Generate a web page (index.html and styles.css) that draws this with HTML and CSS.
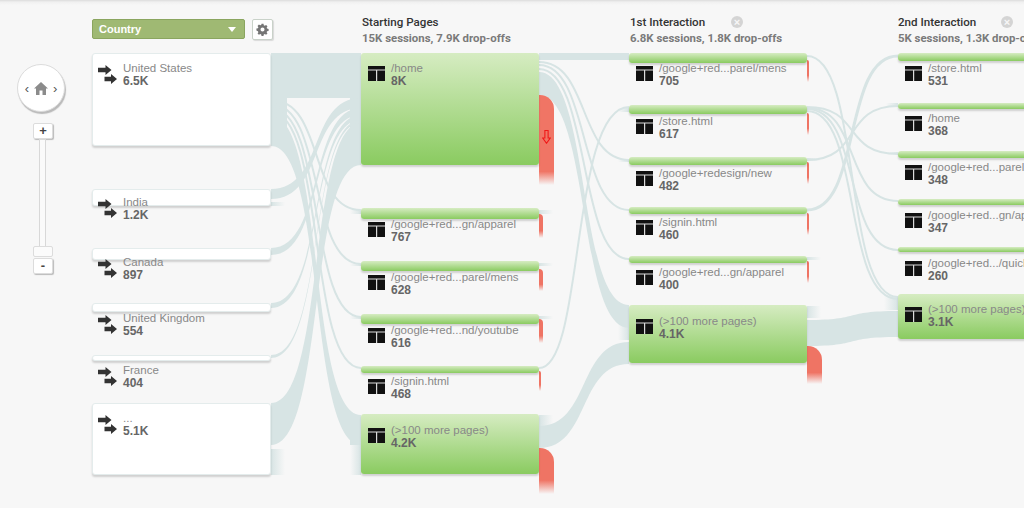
FILE: index.html
```html
<!DOCTYPE html>
<html lang="en">
<head>
<meta charset="utf-8">
<title>Users Flow</title>
<link rel="stylesheet" href="styles.css">
</head>
<body>
<main class="stage">
  <svg class="icon-defs" width="0" height="0" aria-hidden="true">
    <defs>
      <symbol id="arrows" viewBox="0 0 20 20">
        <path d="M0 2.800h7.500V0L13.500 5 7.500 10V7.200H0z"/>
        <path d="M6.500 11.800h6.500V9L19 14 13 19v-2.800H6.500z"/>
      </symbol>
      <symbol id="page" viewBox="0 0 17 15">
        <path d="M0 0h17v15H0z"/>
        <path d="M0 3.400h17v1.200H0zM8 4h1.200v11H8z" fill="#fff" opacity=".85"/>
      </symbol>
      <linearGradient id="fade-r"><stop offset="0" stop-color="#d7e4e4"/><stop offset="1" stop-color="#d7e4e4" stop-opacity="0"/></linearGradient>
      <linearGradient id="fade-l"><stop offset="0" stop-color="#d7e4e4" stop-opacity="0"/><stop offset="1" stop-color="#d7e4e4"/></linearGradient>
    </defs>
  </svg>

  <svg class="links" width="1024" height="508" viewBox="0 0 1024 508" aria-hidden="true">
    <g class="solid">
      <path d="M271 53h90v45h-90z"/>
      <path d="M271 98h16v48h-16z"/>
      <path d="M350 98h11v67h-11z"/>
      <path d="M350 415h11v30h-11z"/>
      <path d="M539 53h90v7h-90z"/>
      <!-- country to starting pages -->
      <path d="M271 116C325 116 308 415 361 415V445C308 445 325 146 271 146z"/>
      <path d="M271 189C325 189 308 98 361 98V108C308 108 325 199 271 199z"/>
      <path d="M271 248C325 248 308 108 361 108V115C308 115 325 255 271 255z"/>
      <path d="M271 303C325 303 308 115 361 115V120C308 120 325 308 271 308z"/>
      <path d="M271 355C325 355 308 120 361 120V123C308 123 325 358 271 358z"/>
      <path d="M271 403C325 403 308 123 361 123V165C308 165 325 445 271 445z"/>
      <!-- starting pages to first interaction -->
      <path d="M539 72C590 72 578 305 629 305V328C578 328 590 95 539 95z"/>
      <path d="M539 426C590 426 578 342 629 342V364C578 364 590 448 539 448z"/>
      <!-- first to second interaction -->
      <path d="M807 320C862 320 842 311 898 311V337C842 337 862 346 807 346z"/>
    </g>
    <g class="ribbons">
      <path class="w2" d="M271 100C325 100 308 210 361 210"/>
      <path class="w2" d="M271 104C325 104 308 264 361 264"/>
      <path class="w2" d="M271 108C325 108 308 317 361 317"/>
      <path class="w2" d="M271 112C325 112 308 368 361 368"/>

      <path class="w2" d="M539 62C590 62 578 160 629 160"/>
      <path class="w2" d="M539 65C590 65 578 210 629 210"/>
      <path class="w2" d="M539 69C590 69 578 259 629 259"/>
      <path class="w2" d="M539 368C585 368 570 107 629 107"/>

      <path class="w2" d="M807 56C862 56 842 297 898 297"/>
      <path class="w2" d="M807 107C862 107 842 154 898 154"/>
      <path class="w2" d="M807 108C862 108 842 201 898 201"/>
      <path class="w2" d="M807 109C862 109 842 250 898 250"/>
      <path class="w2" d="M807 111C862 111 842 299 898 299"/>
      <path class="w2" d="M807 160C862 160 842 106 898 106"/>
      <path class="w3" d="M807 210C862 210 842 56 898 56"/>
    </g>
    <g class="stubs-r">
      <path d="M271 202h14v4h-14z"/>
      <path d="M271 449h14v26h-14z"/>
      <path d="M539 415h14v11h-14z"/>
      <path d="M539 210h14v4h-14z"/>
      <path d="M539 263h14v3h-14z"/>
      <path d="M539 316h14v3h-14z"/>
      <path d="M807 306h14v12h-14z"/>
      <path d="M807 257h14v3h-14z"/>
      <path d="M807 158h14v3h-14z"/>
    </g>
    <g class="stubs-l">
      <path d="M350 445h11v30h-11z"/>
      <path d="M350 210h11v4h-11z"/>
      <path d="M350 263h11v3h-11z"/>
      <path d="M350 316h11v3h-11z"/>
      <path d="M618 108h11v4h-11z"/>
      <path d="M618 160h11v2h-11z"/>
      <path d="M618 322h11v18h-11z"/>
      <path d="M886 103h12v3h-12z"/>
      <path d="M886 152h12v2h-12z"/>
      <path d="M884 296h14v14h-14z"/>
    </g>
  </svg>

  <div class="drop d1"></div><div class="drop d2"></div><div class="drop d3"></div><div class="drop d4"></div><div class="drop d5"></div><div class="drop d6"></div>
  <div class="drop d7"></div><div class="drop d8"></div><div class="drop d9"></div><div class="drop d10"></div><div class="drop d11"></div><div class="drop d12"></div>
  <svg class="down" viewBox="0 0 8 13" aria-hidden="true"><path d="M2.500 .5h3v7H7.500L4 12.300 .5 7.500h2z"/></svg>

  <header class="controls">
    <button class="select" type="button">Country<span class="caret"></span></button>
    <button class="gear" type="button" aria-label="Settings">
      <svg viewBox="0 0 16 16"><path d="M6.800 1h2.400l.4 1.900 1.200.5 1.600-1 1.700 1.700-1 1.600.5 1.200 1.900.4v2.400l-1.900.4-.5 1.200 1 1.600-1.700 1.700-1.600-1-1.200.5-.4 1.900H6.800l-.4-1.900-1.200-.5-1.600 1-1.700-1.700 1-1.600-.5-1.200L.5 9.200V6.800l1.900-.4.500-1.200-1-1.600 1.700-1.700 1.600 1 1.200-.5zM8 5.500a2.500 2.500 0 1 0 0 5 2.500 2.500 0 0 0 0-5z" fill-rule="evenodd"/></svg>
    </button>
  </header>

  <div class="head h1"><h2>Starting Pages</h2><p>15K sessions, 7.9K drop-offs</p></div>
  <div class="head h2"><h2>1st Interaction</h2><p>6.8K sessions, 1.8K drop-offs</p><span class="close">×</span></div>
  <div class="head h3"><h2>2nd Interaction</h2><p>5K sessions, 1.3K drop-offs</p><span class="close">×</span></div>

  <nav class="zoomer" aria-label="Zoom">
    <div class="pan"><span class="chev">‹</span>
      <svg class="home" viewBox="0 0 14 13"><path d="M7 0 0 6.500h2V13h3.500V8.500h3V13H12V6.500h2z"/></svg>
      <span class="chev">›</span></div>
    <button class="zbtn plus" type="button">+</button>
    <div class="track"></div>
    <div class="handle"></div>
    <button class="zbtn minus" type="button">-</button>
  </nav>

  <section class="node white c0 a1"><div class="info"><svg class="ico"><use href="#arrows"/></svg><div><span>United States</span><b>6.5K</b></div></div></section>
  <section class="node white c0 a2"><div class="info up2"><svg class="ico"><use href="#arrows"/></svg><div><span>India</span><b>1.2K</b></div></div></section>
  <section class="node white c0 a3"><div class="info up1"><svg class="ico"><use href="#arrows"/></svg><div><span>Canada</span><b>897</b></div></div></section>
  <section class="node white c0 a4"><div class="info"><svg class="ico"><use href="#arrows"/></svg><div><span>United Kingdom</span><b>554</b></div></div></section>
  <section class="node white c0 a5"><div class="info"><svg class="ico"><use href="#arrows"/></svg><div><span>France</span><b>404</b></div></div></section>
  <section class="node white c0 a6"><div class="info"><svg class="ico"><use href="#arrows"/></svg><div><span>...</span><b>5.1K</b></div></div></section>

  <section class="node green c1 b1"><div class="info up1"><svg class="page"><use href="#page"/></svg><div><span>/home</span><b>8K</b></div></div></section>
  <section class="node green c1 b2"><div class="info"><svg class="page"><use href="#page"/></svg><div><span>/google+red...gn/apparel</span><b>767</b></div></div></section>
  <section class="node green c1 b3"><div class="info"><svg class="page"><use href="#page"/></svg><div><span>/google+red...parel/mens</span><b>628</b></div></div></section>
  <section class="node green c1 b4"><div class="info"><svg class="page"><use href="#page"/></svg><div><span>/google+red...nd/youtube</span><b>616</b></div></div></section>
  <section class="node green c1 b5"><div class="info up1"><svg class="page"><use href="#page"/></svg><div><span>/signin.html</span><b>468</b></div></div></section>
  <section class="node green c1 b6"><div class="info"><svg class="page"><use href="#page"/></svg><div><span>(&gt;100 more pages)</span><b>4.2K</b></div></div></section>

  <section class="node green c2 e1"><div class="info up1"><svg class="page"><use href="#page"/></svg><div><span>/google+red...parel/mens</span><b>705</b></div></div></section>
  <section class="node green c2 e2"><div class="info"><svg class="page"><use href="#page"/></svg><div><span>/store.html</span><b>617</b></div></div></section>
  <section class="node green c2 e3"><div class="info"><svg class="page"><use href="#page"/></svg><div><span>/google+redesign/new</span><b>482</b></div></div></section>
  <section class="node green c2 e4"><div class="info up1"><svg class="page"><use href="#page"/></svg><div><span>/signin.html</span><b>460</b></div></div></section>
  <section class="node green c2 e5"><div class="info"><svg class="page"><use href="#page"/></svg><div><span>/google+red...gn/apparel</span><b>400</b></div></div></section>
  <section class="node green c2 e6"><div class="info"><svg class="page"><use href="#page"/></svg><div><span>(&gt;100 more pages)</span><b>4.1K</b></div></div></section>

  <section class="node green c3 f1"><div class="info up1"><svg class="page"><use href="#page"/></svg><div><span>/store.html</span><b>531</b></div></div></section>
  <section class="node green c3 f2"><div class="info up1"><svg class="page"><use href="#page"/></svg><div><span>/home</span><b>368</b></div></div></section>
  <section class="node green c3 f3"><div class="info"><svg class="page"><use href="#page"/></svg><div><span>/google+red...parel/mens</span><b>348</b></div></div></section>
  <section class="node green c3 f4"><div class="info"><svg class="page"><use href="#page"/></svg><div><span>/google+red...gn/apparel</span><b>347</b></div></div></section>
  <section class="node green c3 f5"><div class="info"><svg class="page"><use href="#page"/></svg><div><span>/google+red.../quickview</span><b>260</b></div></div></section>
  <section class="node green c3 f6"><div class="info up1"><svg class="page"><use href="#page"/></svg><div><span>(&gt;100 more pages)</span><b>3.1K</b></div></div></section>
</main>
</body>
</html>
```
FILE: styles.css
```css
* { box-sizing: border-box; }
html, body { margin: 0; padding: 0; height: 100%; overflow: hidden; }
body { background: #f7f7f7; font-family: "Liberation Sans", Arial, sans-serif; }

.stage {
  position: relative;
  width: 1024px;
  height: 508px;
  overflow: hidden;
  background: linear-gradient(#dcdcdc, #f0f0f0 2px, #f7f7f7 5px);
}
.icon-defs { position: absolute; }
.links { position: absolute; left: 0; top: 0; }
.solid { fill: #d7e4e4; }
.ribbons { fill: none; stroke: #d7e4e4; }
.stubs-r { fill: url(#fade-r); }
.stubs-l { fill: url(#fade-l); }
.w2 { stroke-width: 2; } .w3 { stroke-width: 3; }

/* toolbar */
.controls { position: absolute; left: 92px; top: 19px; display: flex; gap: 7px; }
.select {
  width: 153px; height: 20px; padding: 0 6px;
  display: flex; align-items: center; justify-content: space-between;
  background: #9fb973; border: 1px solid #8aa55f; border-radius: 2px;
  color: #fff; font: bold 11px "Liberation Sans", Arial, sans-serif;
}
.caret { width: 0; height: 0; margin-right: 2px; border: 4px solid transparent; border-top: 5px solid #fff; border-bottom: 0; }
.gear {
  width: 21px; height: 21px; padding: 0; display: flex; align-items: center; justify-content: center;
  background: #fff; border: 1px solid #c9d2c9; border-radius: 2px; box-shadow: 1px 1px 1px rgba(0,0,0,.12);
}
.gear svg { width: 13px; height: 13px; fill: #757575; }

/* column headings */
.head { position: absolute; top: 15px; color: #333; font-family: Roboto, sans-serif; }
.head h2 { margin: 0; font-size: 11.600px; line-height: 14px; font-weight: 500; }
.head p { margin: 2px 0 0; font-size: 11.400px; line-height: 14px; font-weight: 700; color: #7a7a7a; white-space: nowrap; }
.h1 { left: 362px; } .h2 { left: 630px; } .h3 { left: 898px; }
.close {
  position: absolute; top: 1px; left: 101px;
  width: 12px; height: 12px; border-radius: 50%;
  background: #d4d4d4; color: #f7f7f7;
  font: bold 11px/12px "Liberation Sans", sans-serif; text-align: center;
}
.h3 .close { left: 103px; }

/* zoom control */
.pan {
  position: absolute; left: 17px; top: 64px; width: 48px; height: 48px;
  display: flex; align-items: center; justify-content: center; gap: 5px;
  background: #fff; border: 1px solid #dcdcdc; border-radius: 50%;
  box-shadow: 1px 2px 1px rgba(0,0,0,.25);
}
.chev { font-size: 13px; line-height: 13px; color: #555; }
.home { width: 14px; height: 13px; fill: #8b8b8b; }
.zbtn {
  position: absolute; left: 33px; width: 20px; padding: 0;
  background: #fff; border: 1px solid #dcdcdc; border-radius: 2px;
  box-shadow: 1px 1px 1px rgba(0,0,0,.25);
  color: #444; font: bold 13px/12px "Liberation Sans", sans-serif;
}
.plus { top: 123px; height: 16px; }
.minus { top: 258px; height: 16px; }
.track { position: absolute; left: 39px; top: 139px; width: 7px; height: 108px; background: #fafafa; border: 1px solid #d8d8d8; }
.handle { position: absolute; left: 33px; top: 246px; width: 20px; height: 11px; background: #fbfbfb; border: 1px solid #dcdcdc; border-radius: 2px; }

/* nodes */
.node { position: absolute; border-radius: 3px; box-shadow: 0 2px 2px rgba(0,0,0,.16); }
.white { background: #fff; border: 1px solid #e4ecec; }
.green { background: linear-gradient(#d6ecc2, #8acb60); }
.c0 { left: 92px; width: 179px; }
.c1 { left: 361px; width: 178px; }
.c2 { left: 629px; width: 178px; }
.c3 { left: 898px; width: 178px; }

.info {
  position: absolute; left: 6px; top: 10px; display: flex; align-items: flex-start;
  color: #888; font-size: 11.500px; white-space: nowrap;
}
.white .info { top: 8px; left: 5px; }
.info span { display: block; line-height: 13px; }
.info b { display: block; margin-top: 0; line-height: 13px; font-size: 12px; color: #666; }
.info.up1 { margin-top: -1px; }
.info.up2 { margin-top: -2px; }
.ico { width: 20px; height: 20px; margin: 3px 5px 0 0; fill: #333; }
.page { width: 17px; height: 15px; margin: 4px 6px 0 1px; fill: #111; }

.a1 { top: 53px; height: 93px; } .a2 { top: 189px; height: 17px; } .a3 { top: 248px; height: 12px; }
.a4 { top: 303px; height: 9px; } .a5 { top: 355px; height: 6px; } .a6 { top: 403px; height: 72px; }
.b1 { top: 53px; height: 112px; } .b2 { top: 208px; height: 11px; } .b3 { top: 261px; height: 10px; }
.b4 { top: 314px; height: 10px; } .b5 { top: 366px; height: 7px; } .b6 { top: 414px; height: 60px; }
.e1 { top: 53px; height: 10px; } .e2 { top: 105px; height: 9px; } .e3 { top: 157px; height: 8px; }
.e4 { top: 207px; height: 7px; } .e5 { top: 256px; height: 7px; } .e6 { top: 305px; height: 58px; }
.f1 { top: 53px; height: 8px; } .f2 { top: 103px; height: 6px; } .f3 { top: 151px; height: 7px; }
.f4 { top: 199px; height: 6px; } .f5 { top: 247px; height: 5px; } .f6 { top: 294px; height: 45px; }

/* drop-offs */
.drop {
  position: absolute; left: 539px; width: 4px;
  background: linear-gradient(#ef7464, #ef7464 70%, rgba(239,116,100,0));
  border-top-right-radius: 4px;
}
.d1 { top: 95px; height: 90px; width: 15px; border-top-right-radius: 14px; background: linear-gradient(#f07565, #f07565 85%, rgba(239,116,100,0)); }
.d2 { top: 214px; height: 24px; } .d3 { top: 269px; height: 22px; } .d4 { top: 319px; height: 24px; }
.d5 { top: 371px; height: 20px; width: 2px; }
.d6 { top: 448px; height: 46px; width: 15px; border-top-right-radius: 14px; }
.d7, .d8, .d9, .d10, .d11 { left: 807px; width: 2px; }
.d7 { top: 60px; height: 22px; } .d8 { top: 113px; height: 22px; } .d9 { top: 162px; height: 22px; }
.d10 { top: 213px; height: 22px; } .d11 { top: 261px; height: 22px; }
.d12 { left: 807px; top: 346px; height: 38px; width: 15px; border-top-right-radius: 14px; }
.down { position: absolute; left: 542px; top: 130px; width: 9px; height: 14px; fill: none; stroke: #f01818; stroke-width: 1; }
```
